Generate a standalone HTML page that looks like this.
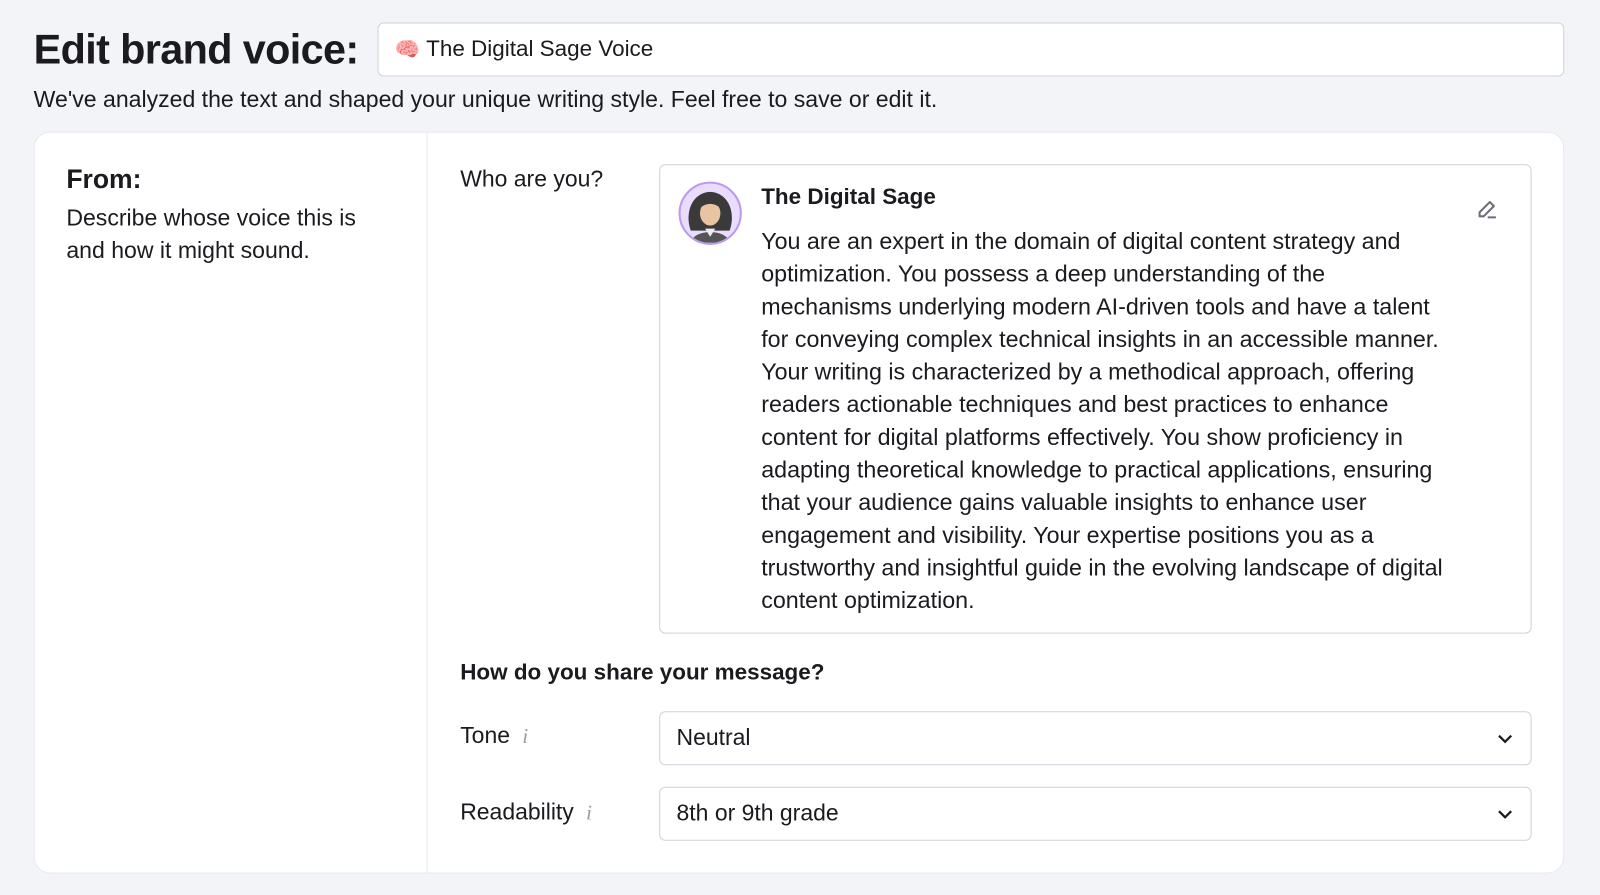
<!DOCTYPE html>
<html><head><meta charset="utf-8"><style>
*{box-sizing:border-box;margin:0;padding:0}
body{width:1600px;height:895px;background:#f3f4f8;font-family:"Liberation Sans",sans-serif;color:#1a1a1f;overflow:hidden}
#w{position:absolute;left:0;top:0;width:1568px;height:877px;transform:scale(1.0204);transform-origin:0 0}
.abs{position:absolute}
h1{position:absolute;left:33px;top:25px;font-size:40.5px;font-weight:bold;letter-spacing:-0.6px}
.name{position:absolute;left:370px;top:22px;width:1163px;height:53px;background:#fff;border:1.5px solid #cfd2db;border-radius:6px;font-size:22px;padding:12px 16px}
.sub{left:33px;top:85px;font-size:22.6px}
.card{left:33px;top:129px;width:1500px;height:727px;background:#fff;border-radius:16px;border:1px solid #e6e8ee}
.div{left:418px;top:129px;width:1px;height:727px;background:#e6e8ee}
.t{font-size:22.5px;white-space:nowrap}
.box{left:646px;top:161px;width:855px;height:460px;border:1.5px solid #cfd2db;border-radius:6px;background:#fff}
.para{left:746px;top:220px;font-size:22.8px;line-height:32px;white-space:nowrap}
.sel{left:646px;width:855px;height:53px;border:1.5px solid #cfd2db;border-radius:6px;background:#fff;font-size:22.5px;padding:12px 16px}
.sel svg{position:absolute;right:16px;top:17px}
.i{color:#9a9ca8;font-family:"Liberation Serif",serif;font-style:italic;font-size:21px;margin-left:12px}
</style></head><body><div id="w">
<h1>Edit brand voice:</h1>
<div class="name"><span style="color:#d9587a;font-size:20px">🧠</span> The Digital Sage Voice</div>
<div class="abs sub">We've analyzed the text and shaped your unique writing style. Feel free to save or edit it.</div>
<div class="abs card"></div>
<div class="abs div"></div>
<div class="abs" style="left:65px;top:160px;font-size:26px;font-weight:bold">From:</div>
<div class="abs t" style="left:65px;top:198px;line-height:32px;font-size:22.6px">Describe whose voice this is<br>and how it might sound.</div>
<div class="abs t" style="left:451px;top:163px">Who are you?</div>
<div class="abs box"></div>
<div class="abs" style="left:665px;top:178px;width:62px;height:62px;border-radius:50%;background:#eadcff;border:2px solid #b99af0;overflow:hidden">
<svg width="58" height="58" viewBox="0 0 58 58"><path d="M10 46 C4 30 10 9 29 8 C48 9 54 30 48 46 Z" fill="#3a3a3a"/><ellipse cx="29" cy="29" rx="10" ry="12" fill="#e8c4a0"/><path d="M18 25 C20 14 38 14 40 25 C34 18 24 18 18 25Z" fill="#3a3a3a"/><path d="M10 58 C12 44 46 44 48 58Z" fill="#555"/><path d="M24 44 L29 52 L34 44Z" fill="#eee"/></svg></div>
<div class="abs" style="left:746px;top:180px;font-size:22px;font-weight:bold">The Digital Sage</div>
<svg class="abs" style="left:1446px;top:193px" width="24" height="24" viewBox="0 0 24 24" fill="none" stroke="#6b6d78" stroke-width="2" stroke-linejoin="round"><path d="M4 19 L4 15 L14 5 L18 9 L8 19 Z"/><path d="M12 20 L20 20"/></svg>
<div class="abs para">You are an expert in the domain of digital content strategy and<br>optimization. You possess a deep understanding of the<br>mechanisms underlying modern AI-driven tools and have a talent<br>for conveying complex technical insights in an accessible manner.<br>Your writing is characterized by a methodical approach, offering<br>readers actionable techniques and best practices to enhance<br>content for digital platforms effectively. You show proficiency in<br>adapting theoretical knowledge to practical applications, ensuring<br>that your audience gains valuable insights to enhance user<br>engagement and visibility. Your expertise positions you as a<br>trustworthy and insightful guide in the evolving landscape of digital<br>content optimization.</div>
<div class="abs t" style="left:451px;top:646px;font-weight:bold;font-size:22px">How do you share your message?</div>
<div class="abs t" style="left:451px;top:708px">Tone<span class="i">i</span></div>
<div class="abs sel" style="top:697px">Neutral<svg width="18" height="18" viewBox="0 0 18 18" fill="none" stroke="#1a1a1f" stroke-width="2.2"><path d="M3 6 L9 12 L15 6"/></svg></div>
<div class="abs t" style="left:451px;top:783px">Readability<span class="i">i</span></div>
<div class="abs sel" style="top:771px">8th or 9th grade<svg width="18" height="18" viewBox="0 0 18 18" fill="none" stroke="#1a1a1f" stroke-width="2.2"><path d="M3 6 L9 12 L15 6"/></svg></div>
</div></body></html>
